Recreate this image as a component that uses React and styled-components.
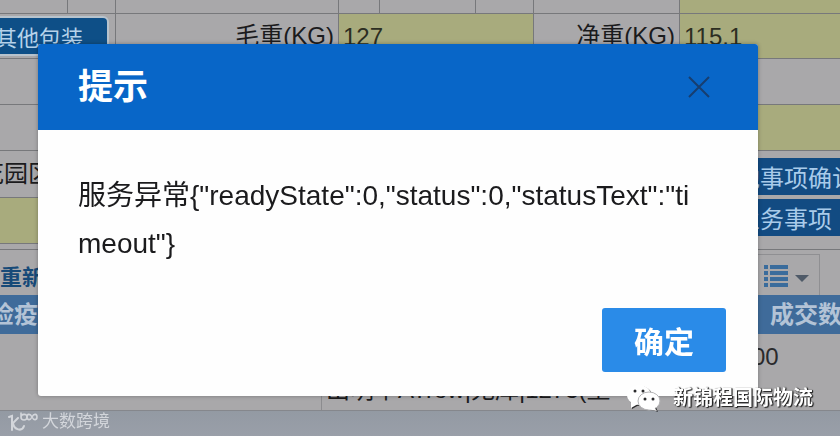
import React from 'react';
import styled, { createGlobalStyle } from 'styled-components';

const App = () => {
  return (
    <>
      <GlobalStyle />
      <Page>
        <HeadRow>
          <Cell />
          <Cell />
          <Cell />
          <Cell />
          <Cell />
          <Cell />
          <Cell />
          <Cell $field />
        </HeadRow>
        <FormRow>
          <Cell>
            <PackButton type="button">其他包装</PackButton>
          </Cell>
          <Cell $end>
            <label htmlFor="gross">毛重(KG)</label>
          </Cell>
          <Cell $field>
            <FieldInput id="gross" defaultValue="127" />
          </Cell>
          <Cell $end>
            <label htmlFor="net">净重(KG)</label>
          </Cell>
          <Cell $field>
            <FieldInput id="net" defaultValue="115.1" />
          </Cell>
        </FormRow>
        <WideRow $height={46}>
          <Cell />
          <Cell />
        </WideRow>
        <WideRow $height={46}>
          <Cell />
          <Cell $field />
        </WideRow>
        <Split>
          <div>
            <WideRow $height={47}>
              <Cell>花园区</Cell>
            </WideRow>
            <WideRow $height={46}>
              <Cell $field />
            </WideRow>
          </div>
          <Actions>
            <ActionButton type="button">他事项确认</ActionButton>
            <ActionButton type="button">业务事项</ActionButton>
          </Actions>
        </Split>
        <Divider />
        <Toolbar>
          <ResetButton type="button">重新</ResetButton>
          <ColumnsButton type="button" aria-label="列">
            <ListIcon />
            <CaretIcon />
          </ColumnsButton>
        </Toolbar>
        <DataTable>
          <thead>
            <tr>
              <th>检疫</th>
              <th>成交数</th>
            </tr>
          </thead>
          <tbody>
            <tr>
              <td />
              <Amount>1.00</Amount>
            </tr>
          </tbody>
        </DataTable>
        <DetailRow>
          <DetailCell />
          <DetailCell>出明单ATrow|无库|1273(重</DetailCell>
        </DetailRow>
        <PageEnd />
      </Page>

      <Overlay>
        <Dialog role="dialog" aria-labelledby="dialog-title">
          <DialogHeader>
            <DialogTitle id="dialog-title">提示</DialogTitle>
            <CloseButton type="button" aria-label="关闭">
              <svg width="22" height="24" viewBox="0 0 22 24" fill="none" stroke="currentColor" strokeWidth="2">
                <path d="M1 2 L21 22 M21 2 L1 22" />
              </svg>
            </CloseButton>
          </DialogHeader>
          <DialogBody>{'服务异常{"readyState":0,"status":0,"statusText":"timeout"}'}</DialogBody>
          <DialogFooter>
            <ConfirmButton type="button">确定</ConfirmButton>
          </DialogFooter>
        </Dialog>
      </Overlay>

      <Watermarks>
        <SiteMark>
          <SiteLogo />
          大数跨境
        </SiteMark>
        <AccountMark>
          <WechatIcon />
          新锦程国际物流
        </AccountMark>
      </Watermarks>
    </>
  );
};

export default App;

const ListIcon = () => (
  <svg width="26" height="24" viewBox="0 0 26 24" fill="#3a6c9c">
    {[1, 7, 13, 19].map((y) => (
      <React.Fragment key={y}>
        <rect x="1" y={y} width="4" height="4" />
        <rect x="7" y={y} width="18" height="4" />
      </React.Fragment>
    ))}
  </svg>
);

const CaretIcon = () => (
  <svg width="14" height="14" viewBox="0 0 14 14" fill="#4f5a68">
    <path d="M0 6 H14 L7 13 Z" />
  </svg>
);

const SiteLogo = () => (
  <svg width="30" height="20" viewBox="0 0 30 20" fill="none" stroke="currentColor" strokeWidth="2" strokeLinecap="round">
    <path d="M1 5 L4 4 V18" />
    <path d="M10 6 L5 11 C6 18 14 20 16 14" />
    <path d="M13 1 V5 C13 9 19 9 19 5 C19 1 13 2 13 5" strokeWidth="1.6" />
    <path d="M24 5 C22 1 19 2 19 5 C19 8 22 9 24 5 C26 1 29 2 29 5 C29 8 26 9 24 5" strokeWidth="1.6" />
  </svg>
);

const WechatIcon = () => (
  <svg width="36" height="28" viewBox="0 0 36 28">
    <g fill="#2b2b2d">
      <ellipse cx="13" cy="12" rx="12" ry="10" />
      <path d="M5 18 L5 25 L12 21 Z" />
      <path d="M28 21 L31 28 L23 25 Z" />
    </g>
    <g fill="#fff">
      <ellipse cx="12" cy="11" rx="12" ry="10" />
      <path d="M4 17 L4 24 L11 20 Z" />
    </g>
    <ellipse cx="22" cy="17" rx="11" ry="9" fill="#fff" stroke="#b4b4b6" />
    <path d="M26 22 L30 27 L21 25 Z" fill="#fff" />
    <g fill="#2b2b2d">
      <circle cx="8" cy="7" r="1.5" />
      <circle cx="16" cy="7" r="1.5" />
      <circle cx="18" cy="15" r="1.5" />
      <circle cx="26" cy="15" r="1.5" />
    </g>
  </svg>
);

const line = '#77787b';
const grey = '#a9a8aa';
const olive = '#a8ab7d';

const GlobalStyle = createGlobalStyle`
  * {
    box-sizing: border-box;
  }

  body {
    margin: 0;
    overflow: hidden;
    background: #959ba5;
    font-family: 'Liberation Sans', 'Noto Sans CJK SC', sans-serif;
    color: #1b1b1d;
  }

  button,
  input {
    font-family: inherit;
    border: 0;
    margin: 0;
  }
`;

// the form behind the dialog is scrolled a little to the right
const Page = styled.main`
  margin-left: -24px;
  background: ${grey};
  font-size: 24px;
  line-height: 28px;
  white-space: nowrap;
`;

const FormRow = styled.div`
  display: grid;
  grid-template-columns: 140px 223px 195px 146px 1fr;
  height: 45px;
`;

const HeadRow = styled(FormRow)`
  grid-template-columns: 92px 48px 223px 41px 96px 58px 146px 1fr;
  height: 14px;
`;

const WideRow = styled.div`
  display: grid;
  grid-auto-columns: 1fr;
  grid-auto-flow: column;
  height: ${(p) => p.$height}px;
`;

const Cell = styled.div`
  display: flex;
  align-items: center;
  justify-content: ${(p) => (p.$end ? 'flex-end' : 'flex-start')};
  min-width: 0;
  padding: 0 4px;
  border-right: 1px solid ${line};
  border-bottom: 1px solid ${line};
  background: ${(p) => (p.$field ? olive : grey)};

  &:last-child {
    border-right: 0;
  }
`;

const FieldInput = styled.input`
  width: 100%;
  padding: 2px 0 0;
  background: transparent;
  font-size: 24px;
  color: #2c2e22;
  outline: none;
`;

const PackButton = styled.button`
  flex: 1;
  height: 40px;
  margin: 0 2px 0 -4px;
  padding: 0 24px 0 0;
  border: 2px solid #b7c3cd;
  border-radius: 6px;
  background: #0e4f87;
  color: #b6d2ea;
  font-size: 22px;
  text-align: right;
`;

const Split = styled.div`
  display: grid;
  grid-template-columns: 1fr 106px;
`;

const Actions = styled.div`
  display: flex;
  flex-direction: column;
  gap: 4px;
  padding-top: 7px;
`;

const ActionButton = styled.button`
  height: 37px;
  padding: 0 2px;
  background: #124b82;
  color: #a9cbea;
  font-size: 24px;
  text-align: left;
  white-space: nowrap;
`;

const Divider = styled.div`
  height: 6px;
  border-bottom: 1px solid ${line};
`;

const Toolbar = styled.div`
  display: flex;
  justify-content: space-between;
  height: 45px;
  padding: 4px 20px 0 24px;
`;

const ResetButton = styled.button`
  padding: 0;
  background: transparent;
  color: #174a78;
  font-size: 22px;
  font-weight: bold;
`;

const ColumnsButton = styled.button`
  display: flex;
  align-items: center;
  gap: 6px;
  padding: 2px 10px 0;
  border: 1px solid #8f8f92;
  border-bottom: 0;
  background: transparent;
`;

const DataTable = styled.table`
  width: 100%;
  table-layout: fixed;
  border-collapse: collapse;

  th {
    height: 39px;
    padding: 0 0 0 14px;
    background: #3f6b9a;
    color: #b3c3d6;
    text-align: left;
  }

  th:last-child {
    width: 84px;
  }

  td {
    height: 46px;
    padding: 0;
  }
`;

const Amount = styled.td`
  color: #2a2a2c;
  text-indent: -24px;
`;

const DetailRow = styled.div`
  display: grid;
  grid-template-columns: 346px 1fr;
  height: 31px;
  border-bottom: 1px solid #85878c;
`;

const DetailCell = styled.div`
  padding-left: 4px;
  line-height: 20px;

  &:first-child {
    border-right: 1px solid #8c8c8f;
  }
`;

const PageEnd = styled.div`
  height: 26px;
  background: linear-gradient(#939aa3, #9a9fa9);
`;

const Overlay = styled.div`
  position: fixed;
  inset: 0;
  display: flex;
  align-items: flex-start;
  padding: 44px 82px 40px 38px;
`;

const Dialog = styled.section`
  flex: 1;
  border-radius: 3px;
  overflow: hidden;
  background: #fefefe;
  box-shadow: 0 0 4px rgba(0, 0, 0, 0.3);
`;

const DialogHeader = styled.header`
  display: flex;
  align-items: center;
  justify-content: space-between;
  height: 86px;
  padding: 0 48px 0 40px;
  background: #0866c8;
`;

const DialogTitle = styled.h2`
  margin: 0;
  font-size: 35px;
  line-height: 48px;
  color: #fff;
`;

const CloseButton = styled.button`
  display: flex;
  padding: 0;
  background: transparent;
  color: #173e70;
  cursor: pointer;
`;

const DialogBody = styled.p`
  margin: 0;
  padding: 42px 48px 40px 40px;
  font-size: 28px;
  line-height: 48px;
  word-break: break-all;
`;

const DialogFooter = styled.footer`
  display: flex;
  justify-content: flex-end;
  padding: 0 32px 24px;
`;

const ConfirmButton = styled.button`
  width: 124px;
  height: 64px;
  padding: 0;
  border-radius: 3px;
  background: #2a8be8;
  color: #fff;
  font-size: 30px;
  font-weight: bold;
  cursor: pointer;
`;

const Watermarks = styled.div`
  position: fixed;
  right: 27px;
  bottom: 4px;
  left: 8px;
  display: flex;
  align-items: flex-end;
  justify-content: space-between;
`;

const SiteMark = styled.div`
  display: flex;
  align-items: center;
  gap: 4px;
  color: #d3d6db;
  font-size: 17px;
  line-height: 20px;
`;

const AccountMark = styled.div`
  display: flex;
  align-items: center;
  gap: 10px;
  padding-bottom: 20px;
  color: #fff;
  font-size: 20px;
  font-weight: bold;
  line-height: 28px;
  text-shadow: 1px 1px 1px #222, 1px 0 1px #222;
`;
